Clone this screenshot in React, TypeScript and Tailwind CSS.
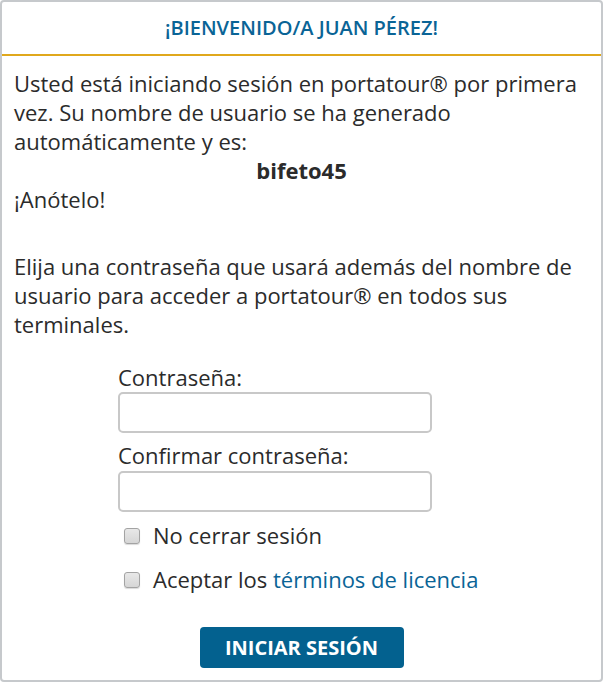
import React, { useState } from 'react';

const Check: React.FC<{ checked: boolean; onToggle: () => void }> = ({ checked, onToggle }) => (
  <span
    onClick={onToggle}
    className="inline-flex shrink-0 w-[16px] h-[16px] rounded-[3px] border border-[#a3a3a3] bg-gradient-to-b from-[#e8e8e8] to-[#d6d6d6] shadow-[0_1px_1px_rgba(0,0,0,0.15)] items-center justify-center cursor-pointer text-[11px] leading-none text-[#333]"
  >
    {checked ? '✓' : ''}
  </span>
);

const App: React.FC = () => {
  const [keep, setKeep] = useState(false);
  const [accept, setAccept] = useState(false);

  return (
    <div className="w-[603px] h-[682px] bg-white font-['Open_Sans',sans-serif] text-[#2b2b2b]">
      <div className="h-full border-2 border-[#c6c9cc] rounded-[4px] flex flex-col">
        {/* Header */}
        <div className="h-[54px] border-b-2 border-[#e0a81c] flex items-center justify-center">
          <h1 className="text-[20px] font-semibold text-[#0a6496]">¡BIENVENIDO/A JUAN PÉREZ!</h1>
        </div>

        {/* Body */}
        <div className="px-[12px] pt-[13px] text-[22px] leading-[29px]">
          <p>
            Usted está iniciando sesión en portatour® por primera vez. Su nombre de usuario se ha generado automáticamente y es:
          </p>
          <p className="text-center font-bold">bifeto45</p>
          <p>¡Anótelo!</p>
          <p className="mt-[38px]">
            Elija una contraseña que usará además del nombre de usuario para acceder a portatour® en todos sus terminales.
          </p>

          <div className="mt-[24px] ml-[104px] w-[314px]">
            <label className="block">Contraseña:</label>
            <input
              type="password"
              className="block w-full h-[41px] border-2 border-[#c8c8c8] rounded-[5px] px-2 outline-none"
            />
            <label className="block mt-[8px]">Confirmar contraseña:</label>
            <input
              type="password"
              className="block w-full h-[41px] mt-[1px] border-2 border-[#c8c8c8] rounded-[5px] px-2 outline-none"
            />
            <div className="flex items-center gap-[13px] ml-[6px] mt-[9px] whitespace-nowrap">
              <Check checked={keep} onToggle={() => setKeep(!keep)} />
              <span>No cerrar sesión</span>
            </div>
            <div className="flex items-center gap-[13px] ml-[6px] mt-[15px] whitespace-nowrap">
              <Check checked={accept} onToggle={() => setAccept(!accept)} />
              <span>
                Aceptar los <a className="text-[#0a6496]">términos de licencia</a>
              </span>
            </div>
          </div>

          <div className="flex justify-center mt-[33px]">
            <button className="w-[204px] h-[41px] rounded-[4px] bg-[#03618f] text-white font-bold text-[20px] leading-none">
              INICIAR SESIÓN
            </button>
          </div>
        </div>
      </div>
    </div>
  );
};

export default App;
